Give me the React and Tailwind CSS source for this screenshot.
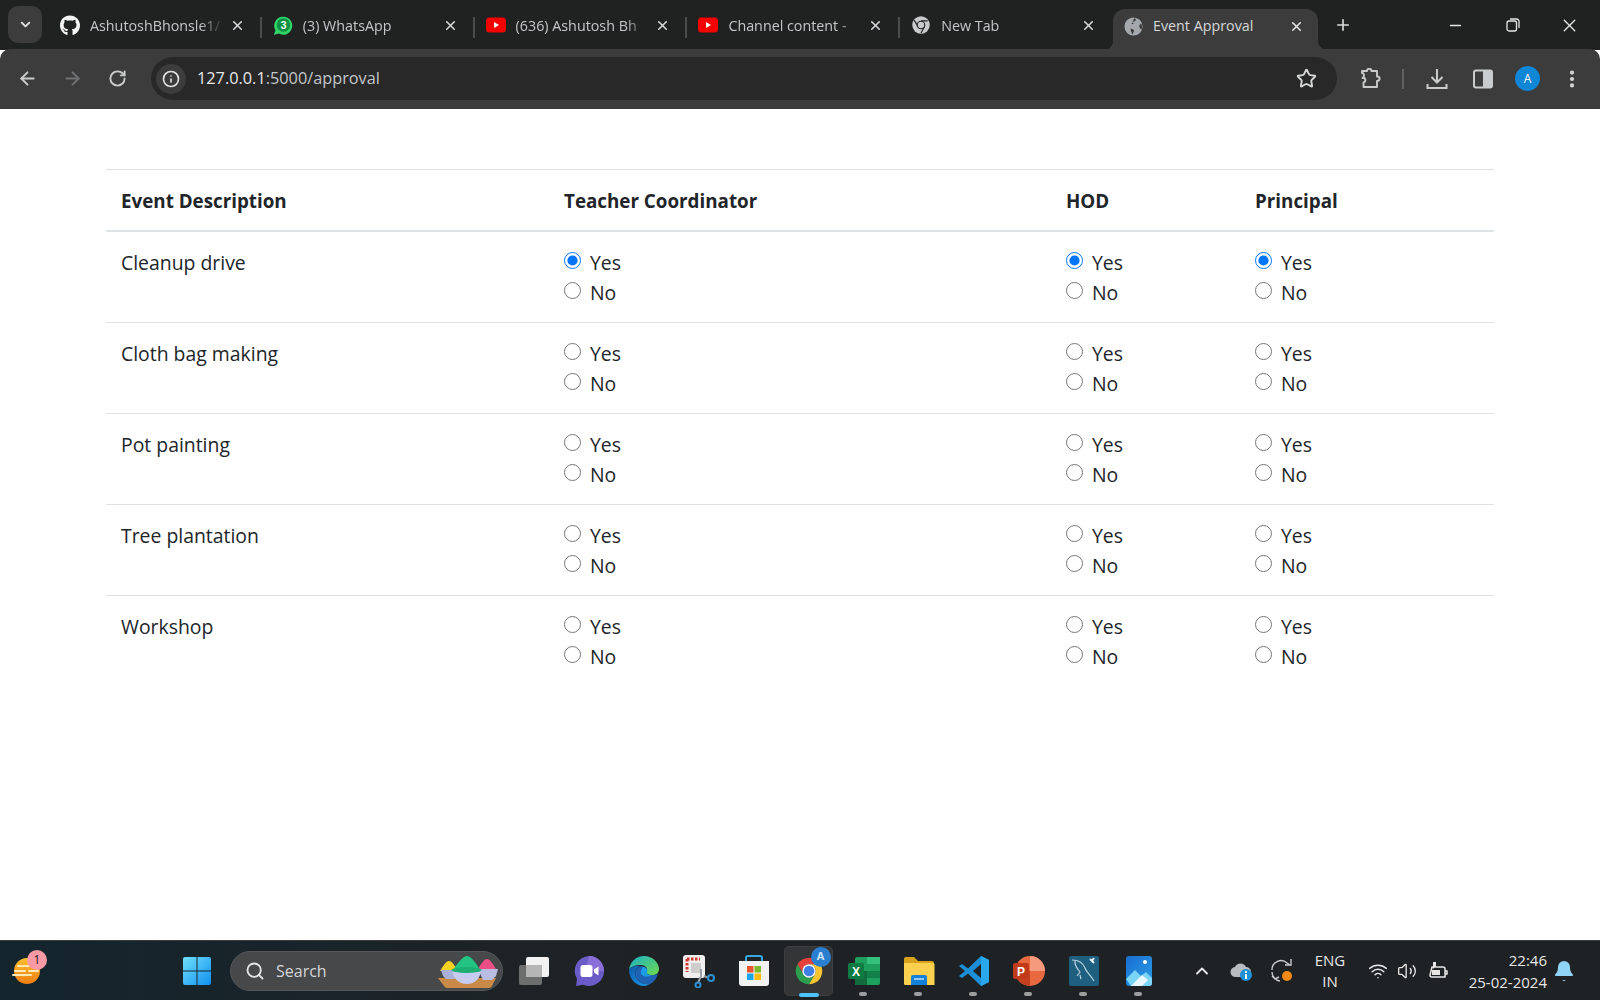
import {
  ArrowLeft, ArrowRight, RotateCw, Star, X, Plus, Minus, Info, Search,
  ChevronUp, ChevronDown, Wifi, Volume2, Bell, EllipsisVertical,
} from "lucide-react";
import { FaGithub } from "react-icons/fa";

const RED = "M3.34 7A10 10 0 0 1 20.66 7H12A5 5 0 0 0 7.67 14.5Z";
const YELLOW = "M16.33 14.5A5 5 0 0 0 12 7H20.66A10 10 0 0 1 12 22Z";
const GREEN = "M3.34 7L7.67 14.5A5 5 0 0 0 16.33 14.5L12 22A10 10 0 0 1 3.34 7Z";

function ChromeColor({ size = 40 }) {
  return (
    <svg width={size} height={size} viewBox="0 0 24 24">
      <path d={RED} fill="#e5403a" />
      <path d={YELLOW} fill="#f5c431" />
      <path d={GREEN} fill="#2c9f4f" />
      <circle cx="12" cy="12" r="5" fill="#fff" />
      <circle cx="12" cy="12" r="4" fill="#3f7fe8" />
    </svg>
  );
}

function ChromeGrey() {
  return (
    <svg width="20" height="20" viewBox="0 0 24 24">
      <circle cx="12" cy="12" r="10.5" fill="#c8cacb" />
      <path d="M4 6.5L8.5 14M12 7H20M16 14.5L12 21.5" stroke="#202222" strokeWidth="1.4" fill="none" />
      <circle cx="12" cy="12" r="5.2" fill="#202222" />
      <circle cx="12" cy="12" r="3.8" fill="#c8cacb" />
    </svg>
  );
}

function YouTube() {
  return (
    <svg width="20" height="16" viewBox="0 0 20 16">
      <rect width="20" height="15" y="0.5" rx="3.5" fill="#f40000" />
      <path d="M8 5l5 3-5 3z" fill="#fff" />
    </svg>
  );
}

function WhatsApp() {
  return (
    <svg width="21" height="21" viewBox="0 0 21 21">
      <path d="M1 20.5l1.5-5A9.5 9.5 0 1 1 6 19z" fill="#2fd366" />
      <circle cx="11" cy="10" r="7" fill="#0f8f43" />
      <text x="11" y="14" textAnchor="middle" fontSize="11.5" fontWeight="700" fill="#e9fff0" fontFamily="Liberation Sans, sans-serif">3</text>
    </svg>
  );
}

function Globe() {
  return (
    <svg width="19" height="19" viewBox="0 0 20 20">
      <circle cx="10" cy="10" r="9.5" fill="#a4a8ac" />
      <path d="M11 1c1.500 1 2 2 1 3-1 1-2.500.5-3 1.500-.3 1 1 1.300 2 1-1 1-2 1-3 .5M18 6.500c1.200 2.500 1.200 5 .5 7-1-1-2-2-2.500-3.500 0-1.500 1-2.500 2-3.500zM7 12c1.500.5 3 1 3.500 2 .3 1.500-1 2.500-1.500 4.500-1-2-2-4-2-6.500z" fill="#3c3c3c" />
    </svg>
  );
}

function ExtensionPuzzle() {
  return (
    <svg width="22" height="22" viewBox="0 0 22 22" fill="none" stroke="#c9cbcc" strokeWidth="1.9" strokeLinejoin="round">
      <path d="M2 3h5c0-3 4.500-3 4.500 0H17v5.500c3.500-.5 3.500 4.500 0 4.500v6H3.500v-4.500c2.500-.5 2.500-4.500 0-4.500H2.500C4.500 9 4.500 5 2 5z" />
    </svg>
  );
}

function DownloadTray() {
  return (
    <svg width="22" height="22" viewBox="0 0 22 22" fill="none" stroke="#c9cbcc" strokeWidth="2">
      <path d="M11 1v13M5.500 9l5.500 5.500L16.500 9" />
      <path d="M1.500 16v4h19v-4" />
    </svg>
  );
}

function SidePanel() {
  return (
    <svg width="20" height="20" viewBox="0 0 20 20">
      <rect x="1" y="1.500" width="18" height="17" rx="2" fill="none" stroke="#c9cbcc" strokeWidth="2" />
      <rect x="10" y="1.500" width="9" height="17" fill="#c9cbcc" />
    </svg>
  );
}

function RestoreIcon() {
  return (
    <svg width="14" height="14" viewBox="0 0 14 14" fill="none" stroke="#e6e6e6" strokeWidth="1.300">
      <rect x="1" y="3" width="9.500" height="10" rx="2" />
      <path d="M4 1h6.500A2.500 2.500 0 0 1 13 3.500V10" />
    </svg>
  );
}

function Tab({ icon, title, sep = true }) {
  return (
    <div className="relative flex items-center w-[212.8px] h-[50px] pl-[11px] pr-[17px]">
      <div className="w-5 flex justify-center shrink-0">{icon}</div>
      <div className="ml-[10px] pt-[2px] flex-1 overflow-hidden whitespace-nowrap text-[14.3px] text-[#c4c7c9] [mask-image:linear-gradient(90deg,#000_82%,transparent)]">
        {title}
      </div>
      <X size={15} strokeWidth={2.6} className="text-[#d4d6d7] ml-[6px] shrink-0" />
      {sep && <div className="absolute right-0 top-[17px] h-[21px] w-[2px] bg-[#4a4c4d]" />}
    </div>
  );
}

function Chrome() {
  return (
    <>
      <div className="flex items-center h-[50px] bg-[#202222]">
        <div className="ml-2 w-[34px] h-[37px] -mt-[2px] rounded-[10px] bg-[#3c3c3c] flex items-center justify-center">
          <ChevronDown size={15} strokeWidth={3} className="text-[#e3e3e3]" />
        </div>
        <div className="ml-[7px] flex">
          <Tab icon={<FaGithub size={21} color="#f4f4f4" />} title="AshutoshBhonsle1/" />
          <Tab icon={<WhatsApp />} title="(3) WhatsApp" />
          <Tab icon={<YouTube />} title="(636) Ashutosh Bh" />
          <Tab icon={<YouTube />} title="Channel content -" />
          <Tab icon={<ChromeGrey />} title="New Tab" sep={false} />
        </div>
        <div className="relative flex items-center self-end w-[205px] h-[42px] -mb-px bg-[#3c3c3c] rounded-t-[12px] pl-[11px] pr-[14px] pb-[8px]">
          <span className="absolute -left-[10px] bottom-px w-[10px] h-[10px] bg-[radial-gradient(circle_at_0_0,transparent_10px,#3c3c3c_10.5px)]" />
          <span className="absolute -right-[10px] bottom-px w-[10px] h-[10px] bg-[radial-gradient(circle_at_100%_0,transparent_10px,#3c3c3c_10.5px)]" />
          <div className="w-5 flex justify-center shrink-0"><Globe /></div>
          <div className="ml-[9px] flex-1 text-[14.3px] text-[#d5d7d8] whitespace-nowrap">Event Approval</div>
          <X size={15} strokeWidth={2.6} className="text-[#e3e3e3]" />
        </div>
        <Plus size={18} strokeWidth={2.2} className="ml-4 text-[#d9dadb]" />
        <div className="ml-auto flex items-center pr-[2px]">
          <div className="w-[57px] flex justify-center"><Minus size={17} strokeWidth={2} className="text-[#e6e6e6]" /></div>
          <div className="w-[57px] flex justify-center"><RestoreIcon /></div>
          <div className="w-[57px] flex justify-center"><X size={21} strokeWidth={1.6} className="text-[#e6e6e6]" /></div>
        </div>
      </div>
      <div className="flex items-center h-[60px] bg-[#3c3c3c] rounded-t-[10px] -mt-px pb-px">
        <div className="ml-[5px] w-[45px] flex justify-center"><ArrowLeft size={21} strokeWidth={2.2} className="text-[#c9cbcc]" /></div>
        <div className="w-[44px] flex justify-center"><ArrowRight size={21} strokeWidth={2.2} className="text-[#6f7172]" /></div>
        <div className="w-[46px] flex justify-center"><RotateCw size={19} strokeWidth={2.4} className="text-[#c9cbcc]" /></div>
        <div className="ml-[11px] flex items-center w-[1186px] h-[43px] rounded-full bg-[#282828] pl-[5px] pr-[20px]">
          <div className="w-[30px] h-[30px] rounded-full bg-[#3c3c3c] flex items-center justify-center">
            <Info size={18} strokeWidth={2.2} className="text-[#e3e3e3]" />
          </div>
          <div className="ml-[11px] text-[16.3px] text-[#e8e8e8]">
            127.0.0.1<span className="text-[#c4c7c9]">:5000/approval</span>
          </div>
          <Star size={21} strokeWidth={2.2} className="ml-auto text-[#d4d6d7]" />
        </div>
        <div className="ml-[23px]"><ExtensionPuzzle /></div>
        <div className="ml-[20px] w-[2px] h-[20px] bg-[#5f6162]" />
        <div className="ml-[22px]"><DownloadTray /></div>
        <div className="ml-[25px]"><SidePanel /></div>
        <div className="ml-[22px] w-[25px] h-[25px] rounded-full bg-[#0f86d6] flex items-center justify-center text-[12px] text-white">A</div>
        <EllipsisVertical size={22} strokeWidth={2.6} className="ml-[21px] text-[#d4d6d7]" />
      </div>
    </>
  );
}

const EVENTS = ["Cleanup drive", "Cloth bag making", "Pot painting", "Tree plantation", "Workshop"];

function Radio({ name, label, checked }) {
  return (
    <label className="flex items-center h-[30px] gap-[9px]">
      <input type="radio" name={name} defaultChecked={checked} className="w-[17px] h-[17px] -mt-1 accent-[#0075ff]" />
      <span className="pt-[2px]">{label}</span>
    </label>
  );
}

function Choice({ name, checked }) {
  return (
    <td className="p-[15px] align-top">
      <Radio name={name} label="Yes" checked={checked} />
      <Radio name={name} label="No" />
    </td>
  );
}

function ApprovalTable() {
  const head = "px-[15px] pt-[16px] pb-[14px] leading-[30px] text-left font-bold text-[18.8px]";
  return (
    <table className="w-[1388px] table-fixed border-collapse text-[19.4px] text-[#212529]">
      <colgroup>
        <col className="w-[443px]" />
        <col className="w-[502px]" />
        <col className="w-[189px]" />
        <col className="w-[254px]" />
      </colgroup>
      <thead>
        <tr className="border-t border-[#dee2e6] border-b-2">
          <th className={head}>Event Description</th>
          <th className={head}>Teacher Coordinator</th>
          <th className={head}>HOD</th>
          <th className={head}>Principal</th>
        </tr>
      </thead>
      <tbody>
        {EVENTS.map((event, i) => (
          <tr key={event} className={i < EVENTS.length - 1 ? "border-b border-[#dee2e6]" : ""}>
            <td className="px-[15px] pt-[16px] pb-[14px] align-top leading-[30px]">{event}</td>
            <Choice name={`teacher-${i}`} checked={i === 0} />
            <Choice name={`hod-${i}`} checked={i === 0} />
            <Choice name={`principal-${i}`} checked={i === 0} />
          </tr>
        ))}
      </tbody>
    </table>
  );
}

function Weather() {
  return (
    <div className="relative w-[52px] h-full flex items-center justify-center pl-px">
      <svg width="30" height="30" viewBox="0 0 30 30">
        <defs>
          <linearGradient id="sun" x1="0" y1="0" x2="0" y2="1">
            <stop offset="0" stopColor="#fbc02d" />
            <stop offset="1" stopColor="#ef7d10" />
          </linearGradient>
        </defs>
        <circle cx="15" cy="15" r="13" fill="url(#sun)" />
        <path d="M6 10h18M3 15h10M17 15h9M1 19h18" stroke="#fde9b8" strokeWidth="2" strokeLinecap="round" />
      </svg>
      <div className="absolute left-[27px] top-[9px] w-[20px] h-[20px] rounded-full bg-[#f79aa6] flex items-center justify-center text-[12px] text-[#2a1a1c]">1</div>
    </div>
  );
}

function WindowsLogo() {
  return (
    <svg width="30" height="30" viewBox="0 0 30 30">
      <defs>
        <linearGradient id="win" x1="0" y1="0" x2="1" y2="1">
          <stop offset="0" stopColor="#6fe0fb" />
          <stop offset="1" stopColor="#118ff0" />
        </linearGradient>
      </defs>
      <path d="M1 3a2 2 0 0 1 2-2h11.500v13.500H1zM15.500 1H27a2 2 0 0 1 2 2v11.500H15.500zM1 15.500h13.500V29H3a2 2 0 0 1-2-2zM15.500 15.500H29V27a2 2 0 0 1-2 2H15.500z" fill="url(#win)" />
    </svg>
  );
}

function HoliBowls() {
  return (
    <svg width="62" height="38" viewBox="0 0 62 38" className="shrink-0">
      <path d="M1 26h58l-4 8a4 4 0 0 1-3 2H10a4 4 0 0 1-3-2z" fill="#c98a47" />
      <path d="M3 19C6 14 9 9 12 9s6 5 9 10z" fill="#f5d120" />
      <path d="M41 17c3-5 6-10 9-10s6 5 9 10z" fill="#ee4d86" />
      <path d="M4 18h17l-1 6-3 3H9l-3-3z" fill="#aab0d8" />
      <path d="M41 17h20l-2 7-4 4H46z" fill="#b9bde2" />
      <path d="M16 18C20 12 26 4 30 4s10 8 13 14z" fill="#23c483" />
      <path d="M15 17h29c0 9-6 15-14 15s-15-6-15-15z" fill="#c7cbf0" />
      <ellipse cx="29.500" cy="18" rx="15" ry="3" fill="#1cae73" />
    </svg>
  );
}

function TaskView() {
  return (
    <svg width="32" height="30" viewBox="0 0 32 30">
      <rect x="8" y="1" width="23" height="20" rx="2" fill="#f2f2f2" />
      <rect x="1" y="9" width="23" height="20" rx="2" fill="#7a7a7a" fillOpacity="0.85" />
      <rect x="8" y="9" width="16" height="12" fill="#b5b5b5" />
    </svg>
  );
}

function Meet() {
  return (
    <svg width="32" height="32" viewBox="0 0 32 32">
      <path d="M16 1a15 15 0 1 1-6 28.700L3 31l1-7A15 15 0 0 1 16 1z" fill="#6a5bc6" />
      <path d="M16 1a15 15 0 0 1 15 15H12z" fill="#8a6fd8" />
      <rect x="7.500" y="10" width="12" height="12" rx="2.500" fill="#fff" />
      <path d="M21 14.500l4.500-3v9l-4.500-3z" fill="#fff" />
    </svg>
  );
}

function Edge() {
  return (
    <svg width="32" height="32" viewBox="0 0 32 32">
      <defs>
        <linearGradient id="edgeTop" x1="0" y1="0" x2="1" y2="1">
          <stop offset="0" stopColor="#1bb0c9" />
          <stop offset="1" stopColor="#6fdc4b" />
        </linearGradient>
        <linearGradient id="edgeLow" x1="0" y1="0" x2="1" y2="1">
          <stop offset="0" stopColor="#0c5aa8" />
          <stop offset="1" stopColor="#1d9bf0" />
        </linearGradient>
      </defs>
      <path d="M1 15C2 7 8 1 16 1c9 0 15 7 15 13 0 5-5 7-9 6-3-1-4-2-3-4 1-3-2-6-6-6C7 10 2 12 1 15z" fill="url(#edgeTop)" />
      <path d="M1 15c1-3 6-5 11-4-4 2-6 6-4 11s8 8 14 7c-2 1-4 2-6 2C8 31 1 24 1 15z" fill="url(#edgeLow)" />
      <path d="M13 11c4 0 7 3 6 5-1 3 1 4 4 4 3 1 7-1 7-2-1 5-4 9-8 11-6 1-12-2-14-7s0-9 5-11z" fill="#1f63b5" />
      <path d="M19 16c-1 3 1 4 4 4-3 2-7 2-9 0s-1-6 1-8c2 0 5 2 4 4z" fill="#1b9ce8" />
    </svg>
  );
}

function SnipTool() {
  return (
    <svg width="34" height="34" viewBox="0 0 34 34">
      <rect x="1" y="1" width="22" height="23" rx="3" fill="#f1efee" />
      <path d="M5 5h13M5 5v13" stroke="#cf3b2c" strokeWidth="3" strokeDasharray="2.500 1.500" />
      <rect x="9" y="9" width="10" height="10" fill="#cfcdcc" />
      <path d="M19 15v7l-3 7M22 22l5 2" stroke="#9ba0a6" strokeWidth="2" fill="none" />
      <circle cx="29" cy="24" r="3" fill="none" stroke="#2c8fd1" strokeWidth="2" />
      <circle cx="16" cy="31" r="2.500" fill="none" stroke="#2c8fd1" strokeWidth="2" />
    </svg>
  );
}

function StoreBag() {
  return (
    <svg width="32" height="32" viewBox="0 0 32 32">
      <path d="M8 6V3a2 2 0 0 1 2-2h12a2 2 0 0 1 2 2v3" fill="none" stroke="#38a7e0" strokeWidth="2" />
      <path d="M1 6h30v22a3 3 0 0 1-3 3H4a3 3 0 0 1-3-3z" fill="#f2f2f2" />
      <rect x="9" y="11" width="6.500" height="6.500" fill="#e8552f" />
      <rect x="16.500" y="11" width="6.500" height="6.500" fill="#7cba2e" />
      <rect x="9" y="18.500" width="6.500" height="6.500" fill="#1aa5e8" />
      <rect x="16.500" y="18.500" width="6.500" height="6.500" fill="#fbbc09" />
    </svg>
  );
}

function Excel() {
  return (
    <svg width="32" height="30" viewBox="0 0 32 30">
      <rect x="7" y="1" width="25" height="28" rx="2" fill="#1f9f5e" />
      <rect x="19" y="1" width="13" height="7" fill="#35c07b" />
      <rect x="19" y="8" width="13" height="7" fill="#1f9f5e" />
      <rect x="19" y="15" width="13" height="7" fill="#13804a" />
      <rect x="7" y="15" width="12" height="14" fill="#116b3d" />
      <rect x="0" y="7" width="16" height="16" rx="2" fill="#0c7a43" />
      <text x="8" y="20" textAnchor="middle" fontSize="12" fontWeight="700" fill="#fff" fontFamily="Liberation Sans, sans-serif">X</text>
    </svg>
  );
}

function Folder() {
  return (
    <svg width="32" height="30" viewBox="0 0 32 30">
      <path d="M1 3a2 2 0 0 1 2-2h8l4 4h14a2 2 0 0 1 2 2v3H1z" fill="#d9a21c" />
      <path d="M1 7h29a1.500 1.500 0 0 1 1.500 1.500V29H2.500A1.500 1.500 0 0 1 1 27.500z" fill="#fbd04e" />
      <path d="M8 21a2 2 0 0 1 2-2h12a2 2 0 0 1 2 2v8H8z" fill="#1580d8" />
      <rect x="11" y="22" width="10" height="2" fill="#8cc9f5" />
    </svg>
  );
}

function VsCode() {
  return (
    <svg width="32" height="32" viewBox="0 0 32 32">
      <path d="M23 1l8 4v22l-8 4L10 18.500 4 23l-3-2 6-5-6-5 3-2 6 4.500z" fill="#1c8fd8" />
      <path d="M23 1l8 4v22l-8 4z" fill="#2aa8ee" />
      <path d="M23 9l-8 7 8 7z" fill="#1f2225" />
    </svg>
  );
}

function PowerPoint() {
  return (
    <svg width="32" height="32" viewBox="0 0 32 32">
      <circle cx="17" cy="16" r="15" fill="#e8693f" />
      <path d="M17 1a15 15 0 0 1 15 15H17z" fill="#f59a7c" />
      <path d="M17 31a15 15 0 0 1-15-15h15z" fill="#c5401f" />
      <rect x="0" y="8" width="16" height="16" rx="2" fill="#c13b1b" />
      <text x="8" y="21" textAnchor="middle" fontSize="12" fontWeight="700" fill="#fff" fontFamily="Liberation Sans, sans-serif">P</text>
    </svg>
  );
}

function MySql() {
  return (
    <svg width="32" height="32" viewBox="0 0 32 32">
      <rect x="1" y="1" width="30" height="30" rx="2" fill="#1f5f80" />
      <path d="M4 5c6 0 11 3 13 8 1 4 5 6 9 13M7 5c-1 6 3 9 5 12l-3 4M12 20l1 4" fill="none" stroke="#b9d3e0" strokeWidth="1.200" />
      <path d="M22 4l4 4M26 3l-2 3" stroke="#e6eef2" strokeWidth="2" />
    </svg>
  );
}

function Photos() {
  return (
    <svg width="32" height="32" viewBox="0 0 32 32">
      <defs>
        <linearGradient id="photo" x1="0" y1="0" x2="1" y2="1">
          <stop offset="0" stopColor="#1a6fd0" />
          <stop offset="1" stopColor="#2a9be6" />
        </linearGradient>
      </defs>
      <rect x="3" y="1" width="26" height="30" rx="3" fill="url(#photo)" />
      <circle cx="22" cy="7" r="2" fill="#fff" />
      <path d="M3 24l9-9 6 6 5-4 6 6v5a3 3 0 0 1-3 3H8z" fill="#7bd5f5" />
      <path d="M8 31l11-11 6 5-6 6z" fill="#e9f7ff" />
    </svg>
  );
}

function SyncIcon() {
  return (
    <svg width="26" height="26" viewBox="0 0 26 26" fill="none" stroke="#c9cbcc" strokeWidth="1.400">
      <path d="M2 12a9 9 0 0 1 15-7l3 2M21 1v6h-6" />
      <path d="M2 14a9 9 0 0 0 8 9M2 18l3 3 4-2" />
      <circle cx="17" cy="18" r="5" fill="#f08a12" stroke="none" />
    </svg>
  );
}

function CloudInfo() {
  return (
    <svg width="24" height="22" viewBox="0 0 24 22">
      <path d="M6 17a5 5 0 0 1-1-10 6 6 0 0 1 11 0 4 4 0 0 1 0 10z" fill="#b7bcc1" />
      <circle cx="16" cy="15" r="6" fill="#1f8fd6" />
      <rect x="15" y="14" width="2" height="5" fill="#fff" />
      <rect x="15" y="11" width="2" height="2" fill="#fff" />
    </svg>
  );
}

function BatteryPlug() {
  return (
    <svg width="22" height="20" viewBox="0 0 22 20" fill="none" stroke="#e6e6e6" strokeWidth="1.500">
      <path d="M5 6h11a2 2 0 0 1 2 2v8H5a2 2 0 0 1-2-2z" />
      <path d="M18 10h2v3h-2" />
      <path d="M6 1v7l3-3V1" fill="#e6e6e6" stroke="none" />
      <rect x="5" y="9" width="8" height="5" fill="#e6e6e6" stroke="none" />
    </svg>
  );
}

function AppSlot({ children, open, active, badge }) {
  return (
    <div className="relative w-[55px] h-full flex items-center justify-center">
      {active && <div className="absolute left-[3px] top-[5px] w-[49px] h-[50px] rounded-[5px] bg-[#333536] border border-[#3c3e3f]" />}
      <div className="relative flex">{children}{badge}</div>
      {open && <div className="absolute left-[23px] bottom-[4px] w-[8px] h-[4px] rounded-full bg-[#9b9d9e]" />}
      {active && <div className="absolute left-[18px] bottom-[3px] w-[20px] h-[4px] rounded-full bg-[#4cc2ff]" />}
    </div>
  );
}

function Taskbar() {
  return (
    <div className="flex items-center h-[60px] border-t border-[#3a3c3d] bg-[linear-gradient(90deg,#14252d,#1f2225_40%)] text-[#e6e6e6]">
      <Weather />
      <div className="ml-[120px] w-[50px] flex justify-center"><WindowsLogo /></div>
      <div className="ml-2 flex items-center w-[273px] h-[40px] rounded-full bg-[#46484a] border border-[#55575a] pl-[14px] pr-[3px]">
        <Search size={20} strokeWidth={2.2} className="text-[#e6e6e6]" />
        <span className="ml-[11px] text-[16px] text-[#d4d6d7]">Search</span>
        <div className="ml-auto"><HoliBowls /></div>
      </div>
      <div className="ml-[3px] flex h-full">
        <AppSlot><TaskView /></AppSlot>
        <AppSlot><Meet /></AppSlot>
        <AppSlot><Edge /></AppSlot>
        <AppSlot><SnipTool /></AppSlot>
        <AppSlot><StoreBag /></AppSlot>
        <AppSlot
          active
          badge={
            <div className="absolute -right-[6px] -top-[8px] w-[20px] h-[20px] rounded-full bg-[#2a7fd0] flex items-center justify-center text-[11px] font-bold text-[#cfe6fb]">A</div>
          }
        >
          <ChromeColor size={32} />
        </AppSlot>
        <AppSlot open><Excel /></AppSlot>
        <AppSlot open><Folder /></AppSlot>
        <AppSlot open><VsCode /></AppSlot>
        <AppSlot open><PowerPoint /></AppSlot>
        <AppSlot open><MySql /></AppSlot>
        <AppSlot open><Photos /></AppSlot>
      </div>
      <div className="ml-[16px] w-[40px] flex justify-center"><ChevronUp size={20} strokeWidth={2.2} /></div>
      <div className="w-[40px] flex justify-center"><CloudInfo /></div>
      <div className="ml-px w-[40px] flex justify-center"><SyncIcon /></div>
      <div className="ml-[2px] w-[50px] text-center text-[15px] leading-[21px]">ENG<br />IN</div>
      <div className="ml-[8px] w-[29px] flex justify-center"><Wifi size={20} strokeWidth={1.8} /></div>
      <div className="w-[29px] flex justify-center"><Volume2 size={20} strokeWidth={1.6} /></div>
      <div className="ml-[2px] w-[29px] flex justify-center"><BatteryPlug /></div>
      <div className="ml-auto text-right text-[15px] leading-[22px]">22:46<br />25-02-2024</div>
      <div className="ml-[5px] mr-[24px] flex justify-center"><Bell size={24} fill="#8fd4f7" strokeWidth={0} /></div>
    </div>
  );
}

export default function App() {
  return (
    <div className="flex flex-col w-[1600px] h-screen bg-white font-['Open_Sans',sans-serif]">
      <Chrome />
      <main className="flex-1 px-[106px] pt-[60px]">
        <ApprovalTable />
      </main>
      <Taskbar />
    </div>
  );
}
